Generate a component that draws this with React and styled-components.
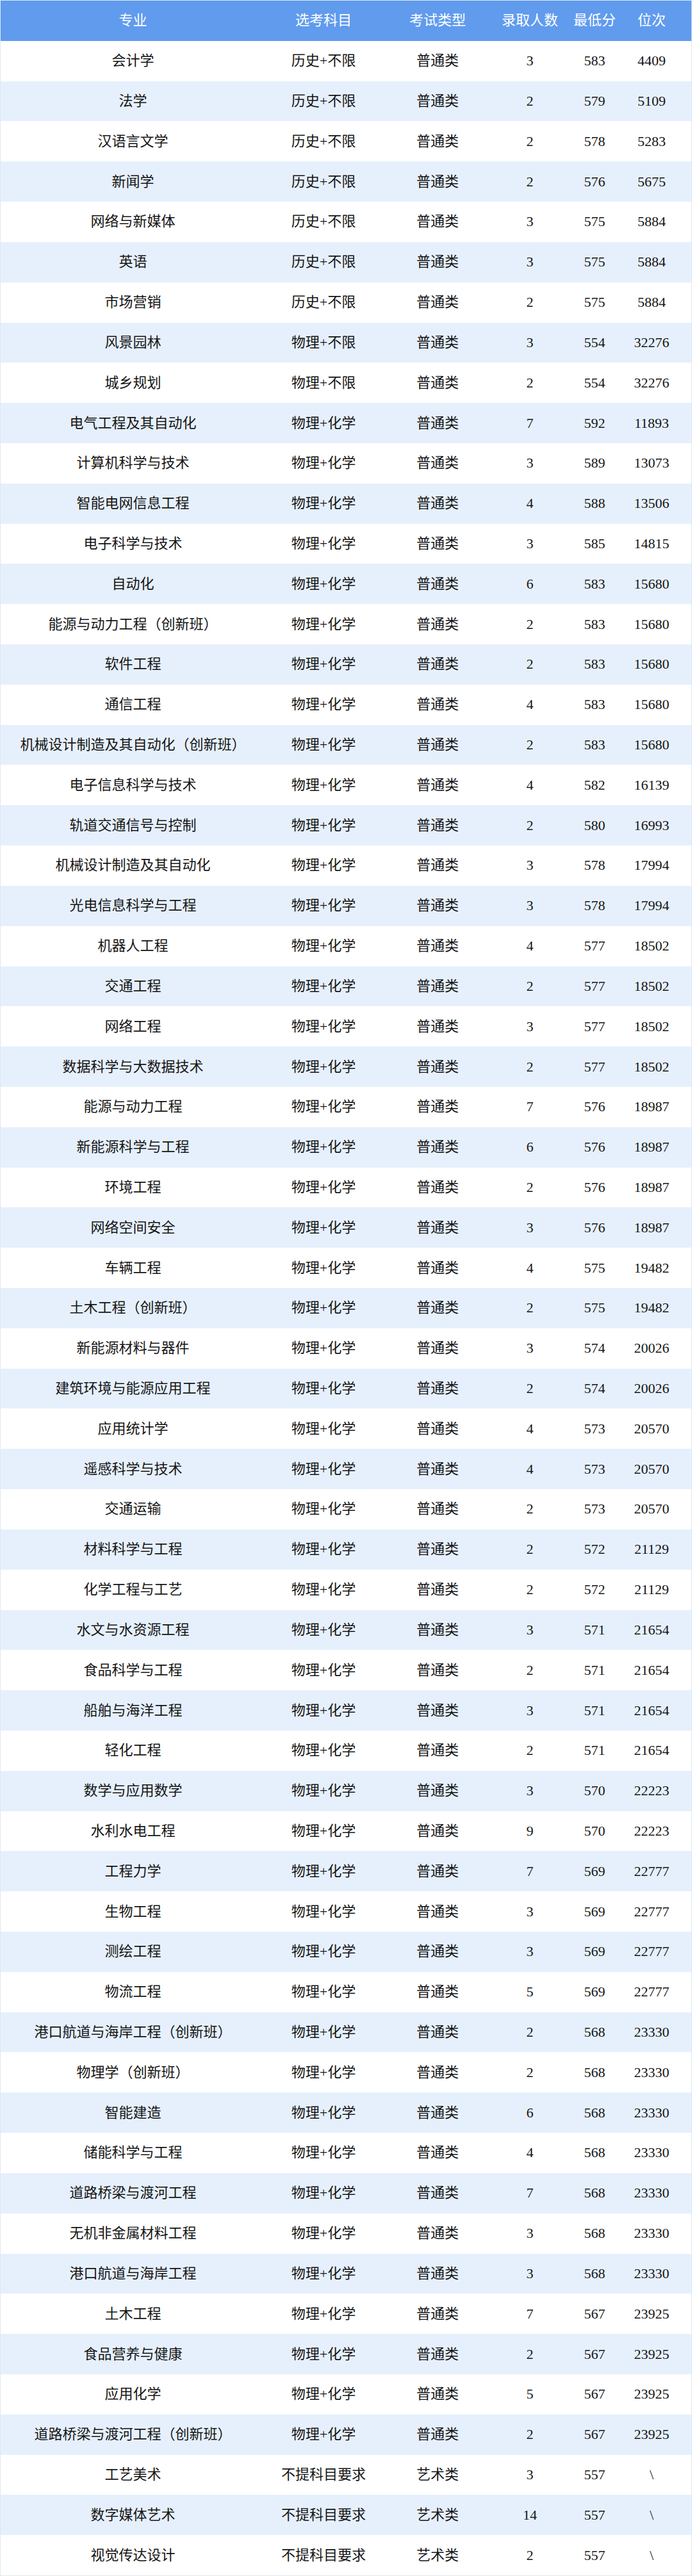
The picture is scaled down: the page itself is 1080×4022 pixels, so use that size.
import React from "react";
import styled, { createGlobalStyle } from "styled-components";

const GlobalStyle = createGlobalStyle`
  html, body { margin: 0; padding: 0; background: #ffffff; }
  body {
    font-family: "Liberation Serif", "Noto Sans CJK SC", serif;
    -webkit-font-smoothing: antialiased;
  }
`;

const Table = styled.div`
  width: 1080px;
  height: 4022px;
  box-sizing: border-box;
  border: 1px solid #dfe7f1;
  display: flex;
  flex-direction: column;
  background: #ffffff;
`;

const Row = styled.div`
  flex: 1 1 0;
  display: grid;
  grid-template-columns: 413px 182px 174px 114px 88px 90px;
  padding-right: 17px;
  align-items: center;
  background: ${(p) => (p.$header ? "#609bee" : p.$striped ? "#e6f0fd" : "#ffffff")};
  color: ${(p) => (p.$header ? "#ffffff" : "#141414")};
`;

const Cell = styled.div`
  text-align: center;
  font-size: 22px;
  line-height: 1;
  white-space: nowrap;
  font-family: "Liberation Serif", "Noto Sans CJK SC", serif;
`;

const headers = ["专业", "选考科目", "考试类型", "录取人数", "最低分", "位次"];

const raw = `会计学|历史+不限|普通类|3|583|4409
法学|历史+不限|普通类|2|579|5109
汉语言文学|历史+不限|普通类|2|578|5283
新闻学|历史+不限|普通类|2|576|5675
网络与新媒体|历史+不限|普通类|3|575|5884
英语|历史+不限|普通类|3|575|5884
市场营销|历史+不限|普通类|2|575|5884
风景园林|物理+不限|普通类|3|554|32276
城乡规划|物理+不限|普通类|2|554|32276
电气工程及其自动化|物理+化学|普通类|7|592|11893
计算机科学与技术|物理+化学|普通类|3|589|13073
智能电网信息工程|物理+化学|普通类|4|588|13506
电子科学与技术|物理+化学|普通类|3|585|14815
自动化|物理+化学|普通类|6|583|15680
能源与动力工程（创新班）|物理+化学|普通类|2|583|15680
软件工程|物理+化学|普通类|2|583|15680
通信工程|物理+化学|普通类|4|583|15680
机械设计制造及其自动化（创新班）|物理+化学|普通类|2|583|15680
电子信息科学与技术|物理+化学|普通类|4|582|16139
轨道交通信号与控制|物理+化学|普通类|2|580|16993
机械设计制造及其自动化|物理+化学|普通类|3|578|17994
光电信息科学与工程|物理+化学|普通类|3|578|17994
机器人工程|物理+化学|普通类|4|577|18502
交通工程|物理+化学|普通类|2|577|18502
网络工程|物理+化学|普通类|3|577|18502
数据科学与大数据技术|物理+化学|普通类|2|577|18502
能源与动力工程|物理+化学|普通类|7|576|18987
新能源科学与工程|物理+化学|普通类|6|576|18987
环境工程|物理+化学|普通类|2|576|18987
网络空间安全|物理+化学|普通类|3|576|18987
车辆工程|物理+化学|普通类|4|575|19482
土木工程（创新班）|物理+化学|普通类|2|575|19482
新能源材料与器件|物理+化学|普通类|3|574|20026
建筑环境与能源应用工程|物理+化学|普通类|2|574|20026
应用统计学|物理+化学|普通类|4|573|20570
遥感科学与技术|物理+化学|普通类|4|573|20570
交通运输|物理+化学|普通类|2|573|20570
材料科学与工程|物理+化学|普通类|2|572|21129
化学工程与工艺|物理+化学|普通类|2|572|21129
水文与水资源工程|物理+化学|普通类|3|571|21654
食品科学与工程|物理+化学|普通类|2|571|21654
船舶与海洋工程|物理+化学|普通类|3|571|21654
轻化工程|物理+化学|普通类|2|571|21654
数学与应用数学|物理+化学|普通类|3|570|22223
水利水电工程|物理+化学|普通类|9|570|22223
工程力学|物理+化学|普通类|7|569|22777
生物工程|物理+化学|普通类|3|569|22777
测绘工程|物理+化学|普通类|3|569|22777
物流工程|物理+化学|普通类|5|569|22777
港口航道与海岸工程（创新班）|物理+化学|普通类|2|568|23330
物理学（创新班）|物理+化学|普通类|2|568|23330
智能建造|物理+化学|普通类|6|568|23330
储能科学与工程|物理+化学|普通类|4|568|23330
道路桥梁与渡河工程|物理+化学|普通类|7|568|23330
无机非金属材料工程|物理+化学|普通类|3|568|23330
港口航道与海岸工程|物理+化学|普通类|3|568|23330
土木工程|物理+化学|普通类|7|567|23925
食品营养与健康|物理+化学|普通类|2|567|23925
应用化学|物理+化学|普通类|5|567|23925
道路桥梁与渡河工程（创新班）|物理+化学|普通类|2|567|23925
工艺美术|不提科目要求|艺术类|3|557|\\
数字媒体艺术|不提科目要求|艺术类|14|557|\\
视觉传达设计|不提科目要求|艺术类|2|557|\\`;

const rows = raw.split("\n").map((line) => line.split("|"));

export default function App() {
  return (
    <>
      <GlobalStyle />
      <Table>
        <Row $header>
          {headers.map((h) => (
            <Cell key={h}>{h}</Cell>
          ))}
        </Row>
        {rows.map((r, i) => (
          <Row key={i} $striped={i % 2 === 1}>
            {r.map((c, j) => (
              <Cell key={j}>{c}</Cell>
            ))}
          </Row>
        ))}
      </Table>
    </>
  );
}
